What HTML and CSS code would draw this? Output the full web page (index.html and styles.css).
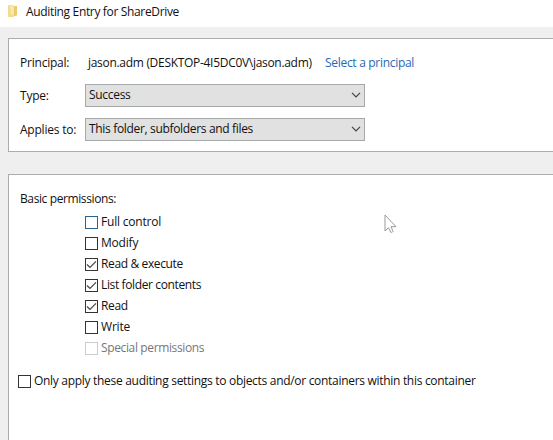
FILE: index.html
```html
<!DOCTYPE html>
<html lang="en">
<head>
<meta charset="utf-8">
<title>Auditing Entry for ShareDrive</title>
<link rel="stylesheet" href="styles.css">
</head>
<body>
<header class="titlebar">
  <svg class="folder" width="10" height="14" viewBox="0 0 10 14"><path d="M0 1h6v12H0z" fill="#f3dc8d"/><path d="M2 2l4-1v9l-3 1z" fill="#f8e8ae"/><path d="M6 2h3v9l-1 1H6z" fill="#eccb6c"/></svg>
  <h1 class="title">Auditing Entry for ShareDrive</h1>
</header>
<main>
  <section class="panel principal-panel">
    <div class="row principal-row"><span class="label principal-label">Principal:</span><span class="principal">jason.adm (DESKTOP-4I5DC0V\jason.adm)</span><a class="link">Select a principal</a></div>
    <div class="row"><span class="label field-label">Type:</span><div class="select"><span class="success">Success</span><svg class="chevron" width="10" height="6" viewBox="0 0 10 6"><path d="M1 .8l4 4 4-4"/></svg></div></div>
    <div class="row"><span class="label field-label">Applies to:</span><div class="select"><span class="scope">This folder, subfolders and files</span><svg class="chevron" width="10" height="6" viewBox="0 0 10 6"><path d="M1 .8l4 4 4-4"/></svg></div></div>
  </section>
  <section class="panel permissions-panel">
    <h2 class="heading"><span>Basic permissions:</span></h2>
    <div class="permissions">
      <div class="check focus"><i class="box"></i><span class="wide">Full control</span></div>
      <div class="check"><i class="box"></i><span class="wide">Modify</span></div>
      <div class="check"><i class="box"><svg width="11" height="11" viewBox="0 0 11 11"><path d="M1 5.5l3 3L10 2.3"/></svg></i><span>Read &amp; execute</span></div>
      <div class="check"><i class="box"><svg width="11" height="11" viewBox="0 0 11 11"><path d="M1 5.5l3 3L10 2.3"/></svg></i><span>List folder contents</span></div>
      <div class="check"><i class="box"><svg width="11" height="11" viewBox="0 0 11 11"><path d="M1 5.5l3 3L10 2.3"/></svg></i><span>Read</span></div>
      <div class="check"><i class="box"></i><span class="wide">Write</span></div>
      <div class="check disabled"><i class="box"></i><span>Special permissions</span></div>
    </div>
    <div class="check only"><i class="box"></i><span>Only apply these auditing settings to objects and/or containers within this container</span></div>
  </section>
</main>
<svg class="cursor" width="13" height="20" viewBox="0 0 13 20"><path d="M1 1v16l3.5-3.3 2.2 4.5c1.4.5 2.2-.3 2.2-1.3L7 12.7h5z"/></svg>
</body>
</html>
```
FILE: styles.css
```css
* { box-sizing: border-box; }
body { margin: 0; width: 553px; height: 440px; overflow: hidden; background: #efefef; color: #111; font: 12px/16px "Open Sans", "Noto Sans", sans-serif; letter-spacing: -.3px; white-space: nowrap; }
.titlebar { height: 27px; display: flex; align-items: flex-start; padding: 4px 0 0 8px; background: #fff; }
.folder { display: block; }
.title { margin: 0 0 0 8px; font-size: 12px; font-weight: 400; letter-spacing: -.34px; }
.panel { margin-left: 8px; border: solid #acacac; border-width: 1px 0 1px 1px; background: #fff; }
.principal-panel { margin-top: 11px; height: 114px; padding: 16px 0 0 11px; }
.row { display: flex; align-items: center; height: 24px; margin-bottom: 10px; }
.principal-row { height: 16px; margin-bottom: 12px; }
.label { width: 65px; flex: none; letter-spacing: -.22px; }
.field-label { padding-top: 2px; }
.principal { width: 240px; padding-left: 3px; }
.link { color: #1f69b5; }
.select { display: flex; align-items: center; justify-content: space-between; width: 280px; height: 23px; padding: 0 3px 0 3px; border: 1px solid #a5a9a9; background: #e1e1e1; }
.scope { letter-spacing: -.33px; }
.chevron path, .box path { fill: none; stroke: #444; stroke-width: 1.2; }
.permissions-panel { margin-top: 22px; height: 280px; padding: 16px 0 0 9px; }
.heading { margin: 0 0 5px 2px; font-size: 12px; font-weight: 400; letter-spacing: -.39px; }
.permissions { margin-left: 67px; letter-spacing: -.37px; }
.wide { letter-spacing: -.2px; }
.check { display: flex; align-items: center; height: 21px; }
.check span { margin-top: -1px; }
.box { display: block; width: 13px; height: 13px; margin-right: 3px; border: 1px solid #333; background: #fff; }
.box svg { display: block; }
.focus .box { border-color: #2c628f; }
.disabled { color: #777; }
.disabled .box { border-color: #ccc; }
.only { margin-top: 12px; }
.cursor { position: absolute; left: 384px; top: 214px; }
.cursor path { fill: #fff; stroke: #999; }
```
